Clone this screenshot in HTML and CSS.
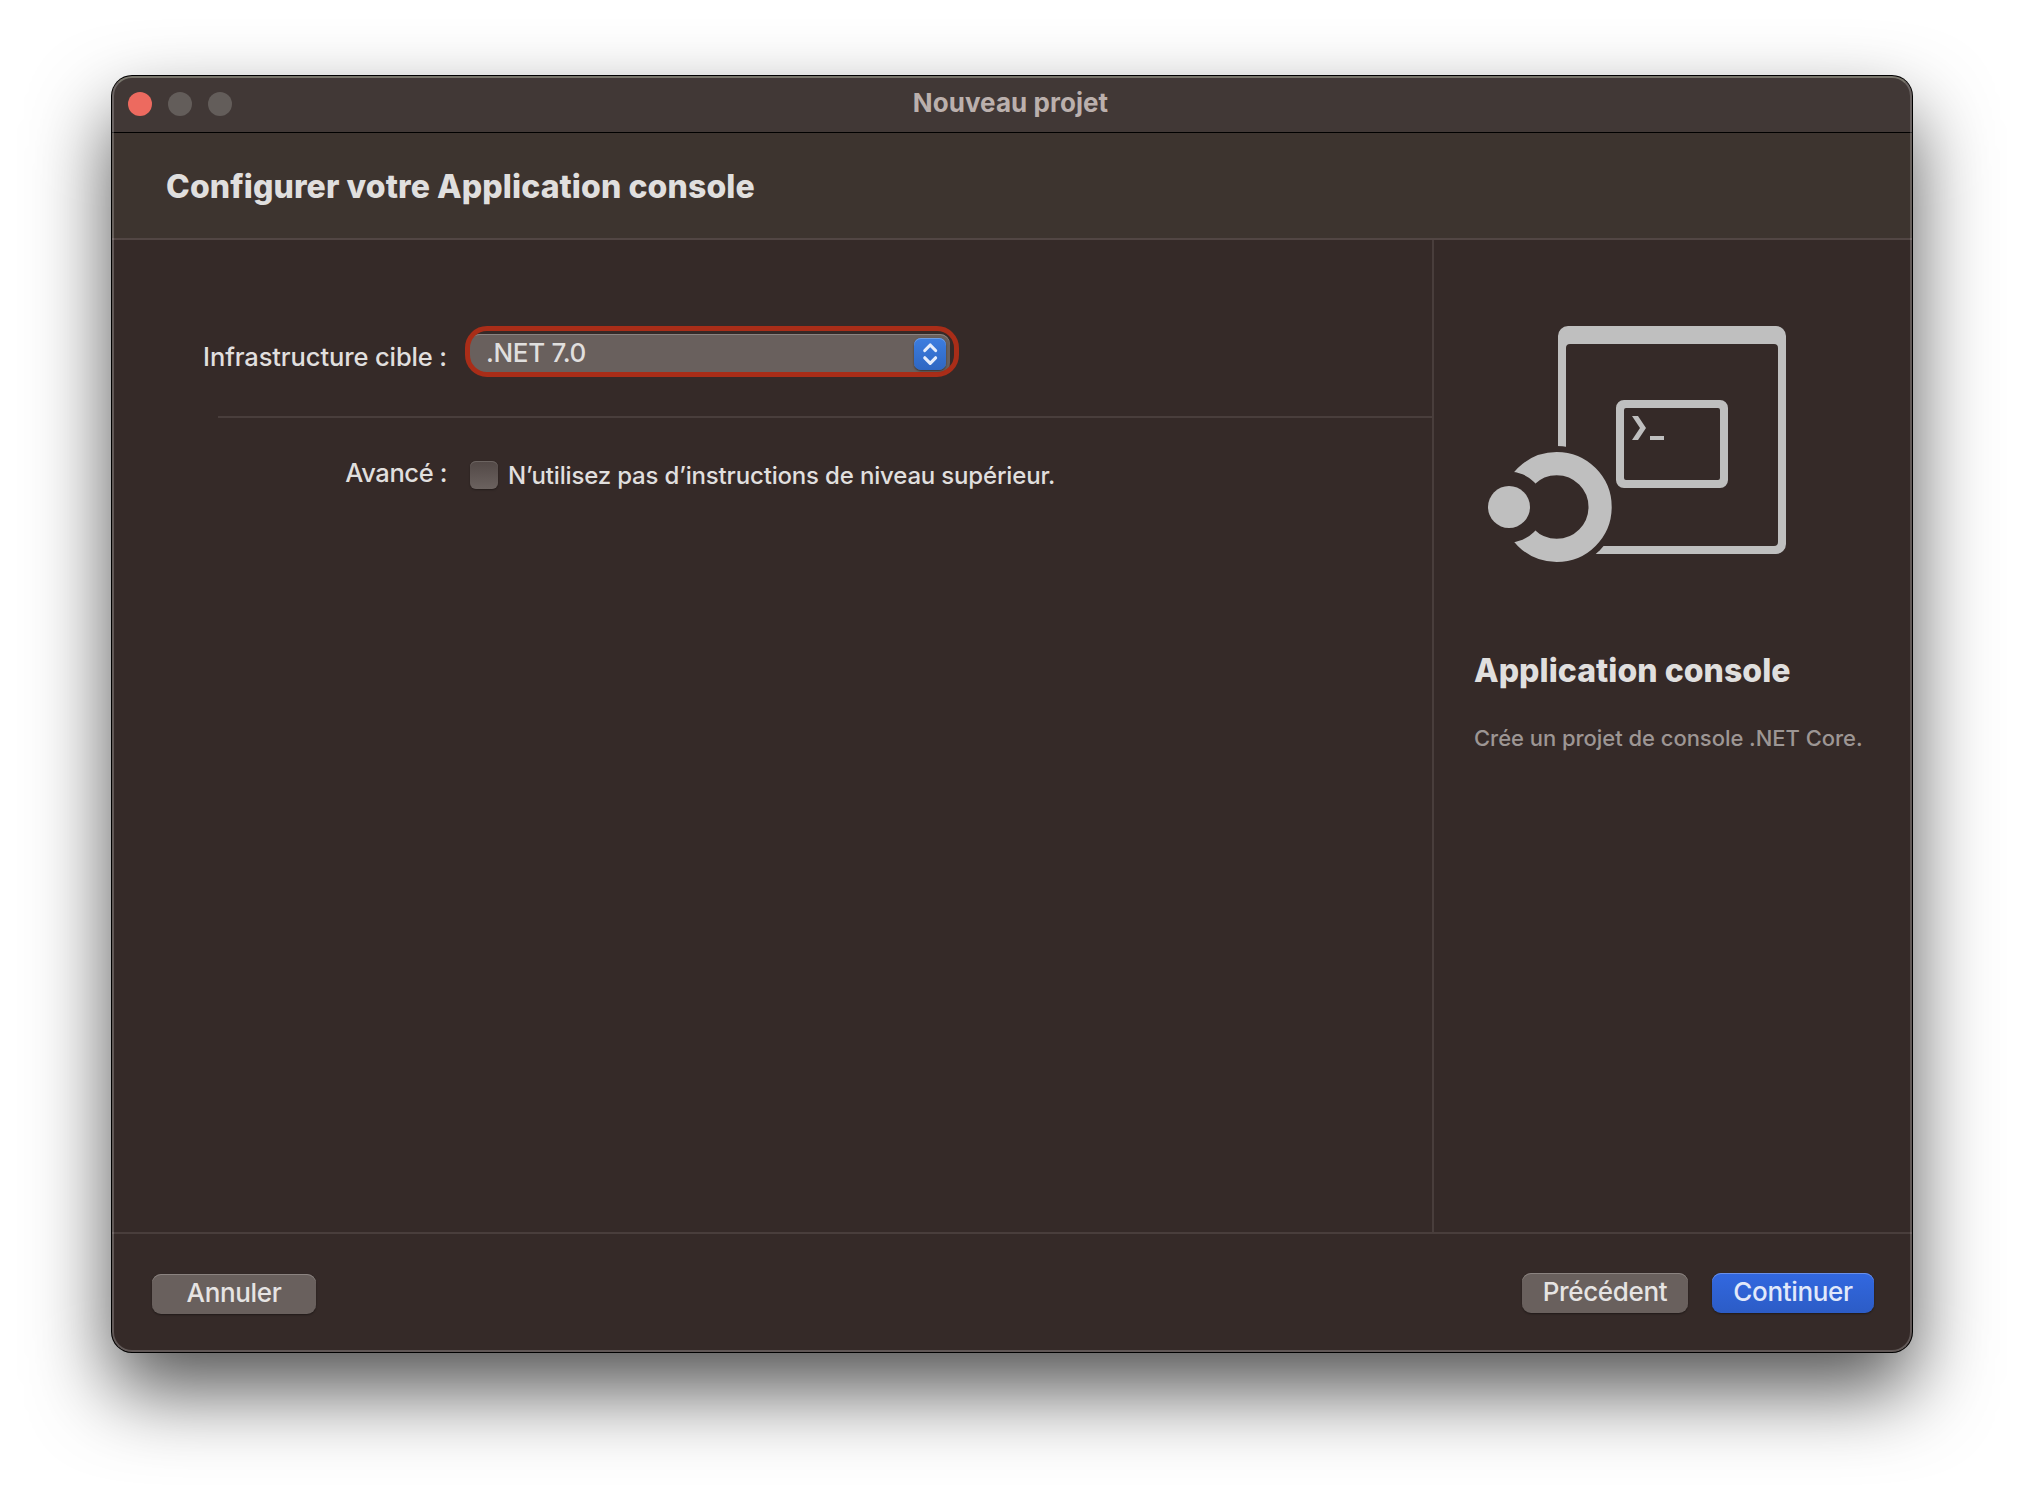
FILE: index.html
```html
<!DOCTYPE html>
<html lang="fr">
<head>
<meta charset="utf-8">
<title>Nouveau projet</title>
<link rel="stylesheet" href="styles.css">
</head>
<body>
<main class="window">
  <header class="titlebar">
    <div class="lights"><i class="light close"></i><i class="light"></i><i class="light"></i></div>
    <span class="window-title">Nouveau projet</span>
  </header>
  <div class="banner"><h1 class="heading">Configurer votre Application console</h1></div>
  <div class="content">
    <section class="form">
      <div class="row framework">
        <label class="label">Infrastructure cible :</label>
        <div class="popup">
          <span class="popup-value">.NET 7.0</span>
          <span class="stepper">
            <svg width="32" height="32" viewBox="0 0 32 32"><path d="M10.8 12.5 16.2 7l5.4 5.5M10.8 19.8l5.4 5.5 5.4-5.5" fill="none" stroke="#e6edfb" stroke-width="3.2" stroke-linecap="round" stroke-linejoin="round"/></svg>
          </span>
        </div>
      </div>
      <hr class="separator">
      <div class="row advanced">
        <span class="label">Avancé :</span>
        <span class="checkbox"></span>
        <span class="check-label">N’utilisez pas d’instructions de niveau supérieur.</span>
      </div>
    </section>
    <aside class="sidebar">
      <svg class="template-icon" width="300" height="238" viewBox="0 0 300 238">
        <defs>
          <mask id="ring-gap" maskUnits="userSpaceOnUse" x="0" y="0" width="300" height="238"><rect width="300" height="238" fill="#fff"/><circle cx="68.7" cy="181" r="61" fill="#000"/></mask>
          <mask id="dot-gap" maskUnits="userSpaceOnUse" x="0" y="0" width="300" height="238"><rect width="300" height="238" fill="#fff"/><circle cx="21" cy="181" r="35.4" fill="#000"/></mask>
        </defs>
        <g fill="#bfbfbf">
          <path mask="url(#ring-gap)" fill-rule="evenodd" d="M80 0H288a10 10 0 0 1 10 10V218a10 10 0 0 1-10 10H80a10 10 0 0 1-10-10V10A10 10 0 0 1 80 0ZM82 18a4 4 0 0 0-4 4V216a4 4 0 0 0 4 4H286a4 4 0 0 0 4-4V22a4 4 0 0 0-4-4Z"/>
          <path fill-rule="evenodd" d="M136 74H232a8 8 0 0 1 8 8V154a8 8 0 0 1-8 8H136a8 8 0 0 1-8-8V82a8 8 0 0 1 8-8ZM138 82a2 2 0 0 0-2 2V152a2 2 0 0 0 2 2H230a2 2 0 0 0 2-2V84a2 2 0 0 0-2-2Z"/>
          <path d="M144 90h6l8 12-8 12h-6l8-12ZM162 110h14v4h-14Z"/>
          <circle cx="21" cy="181" r="21"/>
        </g>
        <circle mask="url(#dot-gap)" cx="68.7" cy="181" r="43.4" fill="none" stroke="#bfbfbf" stroke-width="23.2"/>
      </svg>
      <h2 class="template-name">Application console</h2>
      <p class="template-text">Crée un projet de console .NET Core.</p>
    </aside>
  </div>
  <footer class="footer">
    <button class="button cancel">Annuler</button>
    <button class="button previous">Précédent</button>
    <button class="button primary">Continuer</button>
  </footer>
</main>
</body>
</html>
```
FILE: styles.css
```css
* { box-sizing: border-box; }
body {
  margin: 0;
  height: 1500px;
  padding: 76px 112px;
  overflow: hidden;
  background: #fff;
  color: #e0dfde;
  font-family: Inter, "Liberation Sans", sans-serif;
  font-weight: 450;
  white-space: nowrap;
}
h1, h2, p { margin: 0; }
.window {
  position: relative;
  display: flex;
  flex-direction: column;
  width: 1800px;
  height: 1276px;
  overflow: hidden;
  border-radius: 20px;
  background: #352a28;
  box-shadow: 0 0 0 1px #000, 0 38px 80px rgba(0, 0, 0, .68);
}
/* light rim along the window edge */
.window::after {
  content: "";
  position: absolute;
  inset: 0;
  border: 2px solid rgba(255, 255, 255, .22);
  border-top-color: rgba(235, 245, 220, .32);
  border-radius: 20px;
  pointer-events: none;
}
.titlebar {
  display: grid;
  grid-template-columns: 1fr auto 1fr;
  align-items: center;
  height: 57px;
  padding: 0 16px;
  background: #413836;
  border-bottom: 1px solid #000;
}
.lights { display: flex; gap: 16px; }
.light { width: 24px; height: 24px; border-radius: 50%; background: #635d5a; }
.light.close { background: #ed6a5f; }
.window-title { padding: 0 3px 3px 0; font-size: 26px; font-weight: 700; line-height: 32px; letter-spacing: .05px; color: #bbb0ad; }
.banner {
  height: 107px;
  padding: 34px 54px 0;
  background: #3d342f;
  border-bottom: 2px solid #524644;
}
.heading, .template-name { font-size: 32px; font-weight: 800; line-height: 40px; }
.heading { letter-spacing: .1px; }
.content { display: flex; height: 992px; }
.form { width: 1320px; padding-top: 86px; }
.row { display: flex; align-items: flex-start; }
.label { width: 335px; text-align: right; font-size: 25.5px; line-height: 32px; letter-spacing: -.12px; }
.framework { height: 90px; }
.framework .label { padding-top: 15px; }
.popup {
  position: relative;
  display: flex;
  justify-content: space-between;
  width: 494px;
  height: 51px;
  margin-left: 18px;
  padding: 12px 13px 0 21px;
  border-radius: 22px;
}
.popup::before {
  content: "";
  position: absolute;
  left: 4px;
  top: 8px;
  width: 481px;
  height: 39px;
  border-radius: 11px 10px 10px 18px;
  background: #69605d;
  box-shadow: inset 0 1px #8b8380;
}
.popup::after {
  content: "";
  position: absolute;
  inset: 0;
  border: 5.5px solid #a92d18;
  border-radius: 22px;
}
.popup-value { position: relative; z-index: 1; margin-top: -1px; font-size: 26px; line-height: 31px; letter-spacing: -.35px; }
.stepper {
  position: relative;
  z-index: 1;
  width: 32px;
  height: 32px;
  border-radius: 7px;
  background: linear-gradient(#3c7de0, #2f67c2);
  box-shadow: inset 0 1px #6c9de8, 0 1px 2px rgba(0, 0, 0, .5);
}
.stepper svg { display: block; }
.separator { height: 2px; margin: 0 0 0 106px; border: 0; background: #493e3c; }
.advanced { padding-top: 43px; }
.advanced .label { margin-top: -4px; letter-spacing: -.4px; }
.checkbox {
  width: 28px;
  height: 28px;
  margin-left: 23px;
  border-radius: 6px;
  background: linear-gradient(#524846, #6b625f);
  box-shadow: inset 0 1px #6c6461, 0 1px 2px rgba(0, 0, 0, .35);
}
.check-label { margin: -1px 0 0 10px; font-size: 24px; line-height: 32px; letter-spacing: -.17px; }
.sidebar { width: 480px; padding: 86px 0 0 40px; border-left: 2px solid #493e3c; }
.template-icon { display: block; margin-left: 14px; }
.template-name { margin-top: 87px; letter-spacing: .04px; }
.template-text { margin-top: 31px; font-size: 22px; line-height: 32px; letter-spacing: -.04px; color: #9d9694; }
.footer {
  display: flex;
  align-items: flex-start;
  height: 120px;
  padding: 39px 38px 0 40px;
  border-top: 2px solid #493e3c;
}
.button {
  width: 164px;
  height: 40px;
  padding: 0 0 3px;
  border: 0;
  border-radius: 9px;
  background: #69605d;
  box-shadow: inset 0 1px #8b8380, 0 1px 2px rgba(0, 0, 0, .4);
  color: #e6e4e3;
  font: 450 26px/37px Inter, "Liberation Sans", sans-serif;
  letter-spacing: -.35px;
}
.cancel { margin: 1px auto 0 0; }
.previous { width: 166px; }
.primary {
  width: 162px;
  margin-left: 24px;
  background: linear-gradient(#3268e0, #2c5cc6);
  box-shadow: inset 0 1px #6a90ea, 0 1px 2px rgba(0, 0, 0, .4);
  color: #e2e9fa;
}
```
